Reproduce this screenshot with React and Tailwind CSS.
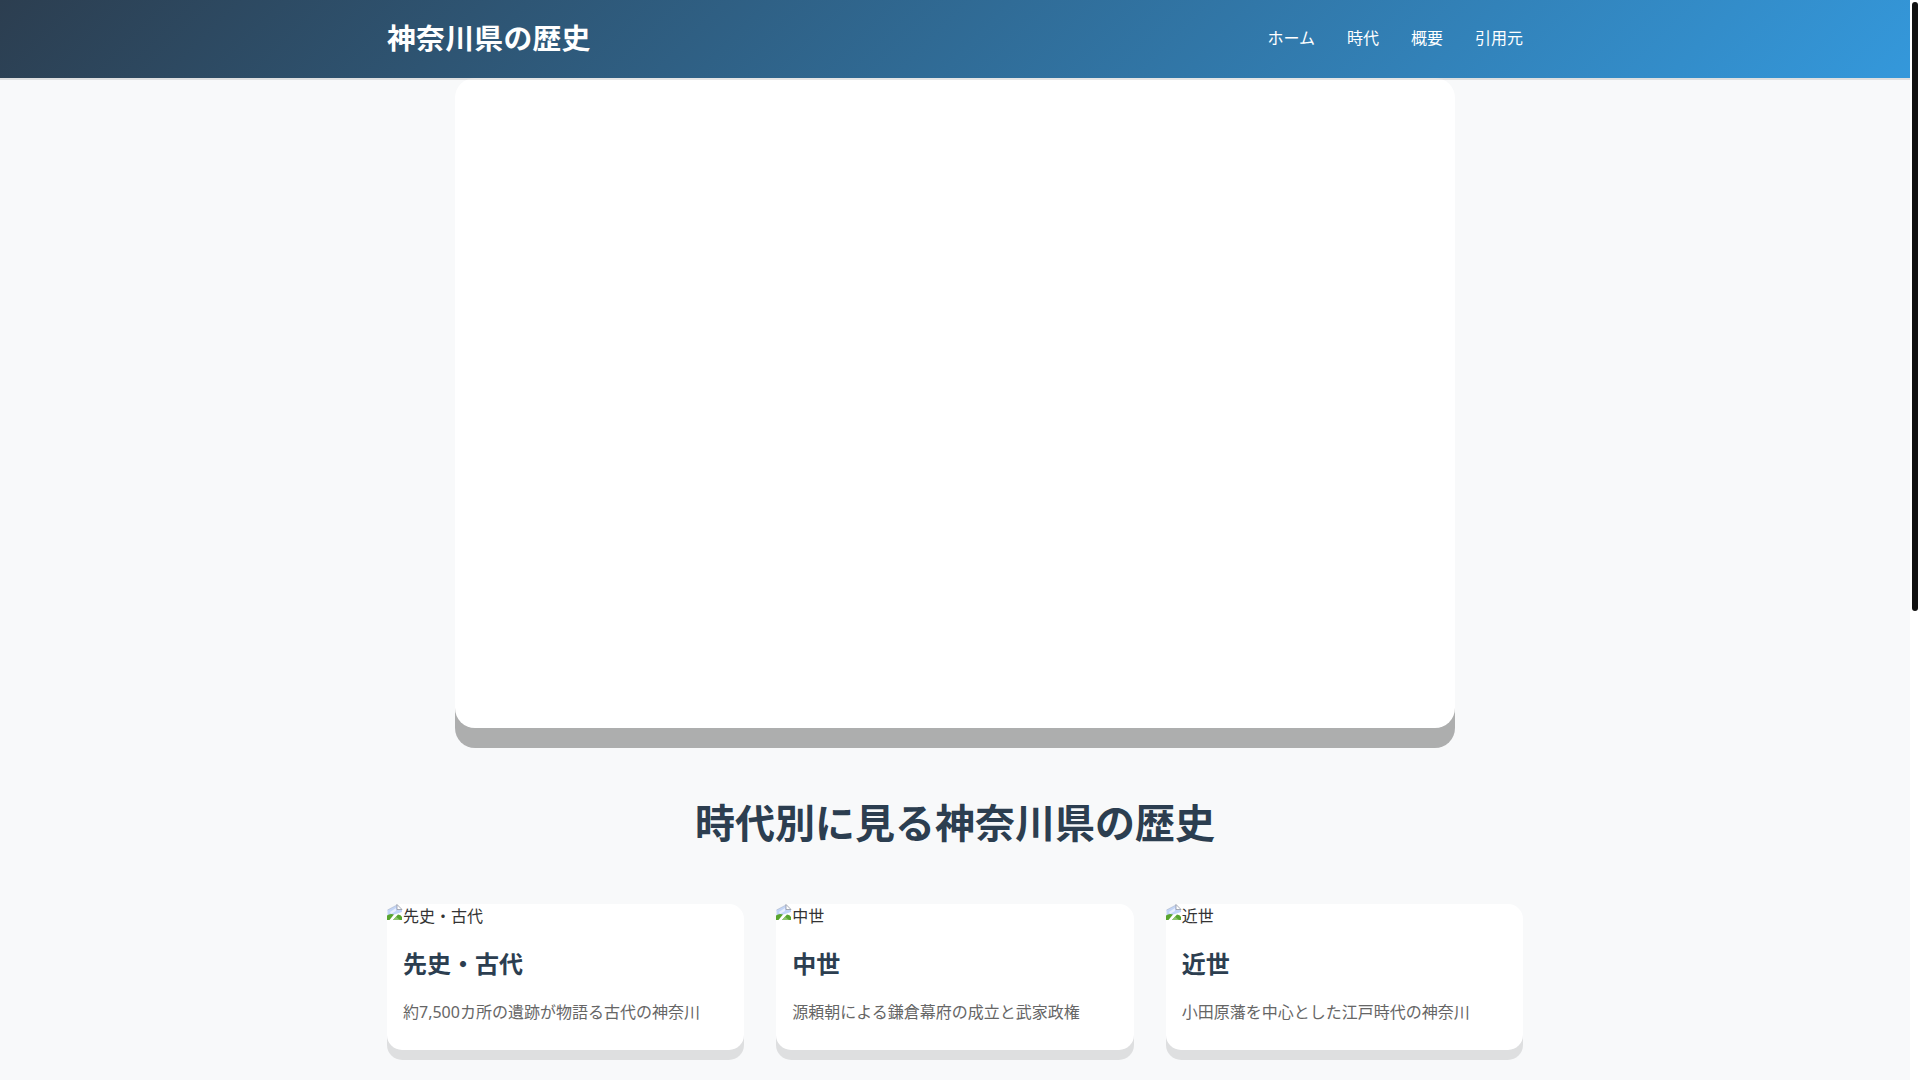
const BrokenImage = () => (
  <svg width="16" height="16" viewBox="0 0 16 16" className="block shrink-0" aria-hidden="true">
    <path d="M0.5 11 V6 L10 1 V5.5 H15 V8 L3 12 Z" fill="#c3d5f7" />
    <path d="M3 8 L9 4 L9 7 L4 10 Z" fill="#e8effc" />
    <path d="M0.5 6 L10 1" stroke="#aab4c6" strokeWidth="0.6" fill="none" />
    <path d="M10 0.5 V5.5 H15 L10 0.5 Z" fill="#ffffff" stroke="#8f96a3" strokeWidth="0.8" />
    <path d="M0 16 V11.5 Q3 9 7 10.5 L2.5 16 Z" fill="#58a52f" />
    <path d="M6 16 L11 10.5 Q14 10.5 15 13 V16 Z" fill="#58a52f" />
    <path d="M6 16 L9 12.7 L13 16 Z" fill="#8cc46c" />
  </svg>
);

const cards = [
  { t: "先史・古代", d: "約7,500カ所の遺跡が物語る古代の神奈川" },
  { t: "中世", d: "源頼朝による鎌倉幕府の成立と武家政権" },
  { t: "近世", d: "小田原藩を中心とした江戸時代の神奈川" },
];

export default function App() {
  return (
    <div className="flex h-screen overflow-hidden bg-[#f8f9fa] text-[#333] text-base leading-[1.6] font-['Noto_Sans','Noto_Sans_CJK_JP',sans-serif]">
      <div className="flex-1 min-w-0">
        <header className="relative z-10 h-[78px] bg-[linear-gradient(135deg,#2c3e50,#3498db)] shadow-[0_2px_0_rgba(0,0,0,0.1)]">
          <div className="max-w-[1200px] mx-auto h-full px-8 flex items-center justify-between">
            <div className="text-[28.8px] font-bold tracking-[0.3px] text-white pb-[2px]">神奈川県の歴史</div>
            <nav className="flex gap-8 text-white">
              <a>ホーム</a>
              <a>時代</a>
              <a>概要</a>
              <a>引用元</a>
            </nav>
          </div>
        </header>
        <div className="mx-auto w-[1000px] h-[650px] bg-white rounded-[20px] shadow-[0_20px_0_rgba(0,0,0,0.3)]" />
        <main className="max-w-[1200px] mx-auto px-8">
          <h2 className="text-[40px] font-bold text-[#2c3e50] text-center mt-[63px] mb-[49px]">時代別に見る神奈川県の歴史</h2>
          <div className="grid grid-cols-3 gap-8">
            {cards.map((c) => (
              <article key={c.t} className="bg-white rounded-[15px] shadow-[0_10px_0_rgba(0,0,0,0.1)]">
                <div className="flex items-start h-[25px]">
                  <BrokenImage />
                  <span>{c.t}</span>
                </div>
                <div className="p-4 pb-[24px]">
                  <h3 className="text-2xl leading-[1.6] font-bold text-[#2c3e50] mb-[17px]">{c.t}</h3>
                  <p className="text-[#666]">{c.d}</p>
                </div>
              </article>
            ))}
          </div>
        </main>
      </div>
      <div className="w-[10px] shrink-0 bg-white pt-[2px] pl-[2px] pr-[2px]">
        <div className="h-[609px] w-[6px] bg-[#111] rounded-[3px]" />
      </div>
    </div>
  );
}
